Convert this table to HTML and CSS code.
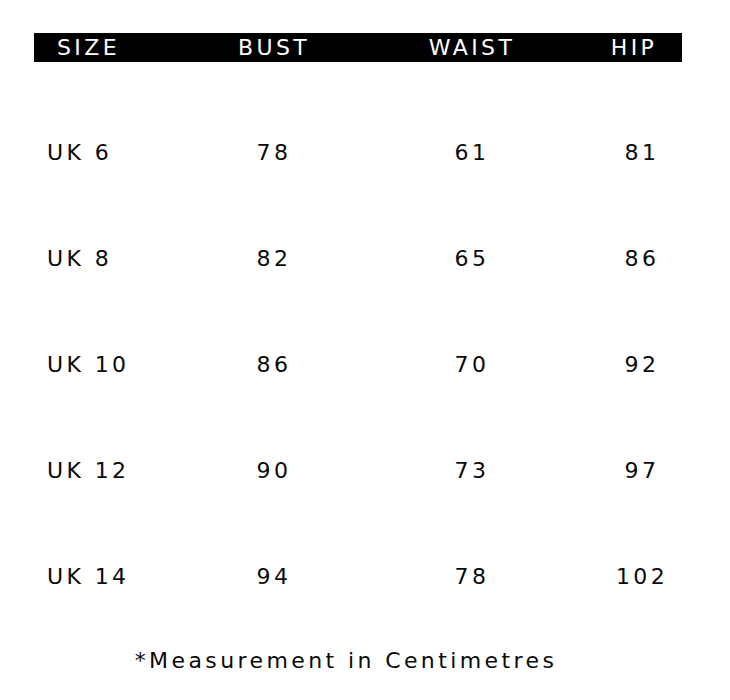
FILE: index.html
```html
<!DOCTYPE html>
<html>
<head>
<meta charset="utf-8">
<link rel="stylesheet" href="styles.css">
</head>
<body>
<div class="chart">
  <div class="row head">
    <div class="c1">SIZE</div>
    <div class="c2">BUST</div>
    <div class="c3">WAIST</div>
    <div class="c4">HIP</div>
  </div>
  <div class="body">
    <div class="row"><div class="c1">UK 6</div><div class="c2">78</div><div class="c3">61</div><div class="c4">81</div></div>
    <div class="row"><div class="c1">UK 8</div><div class="c2">82</div><div class="c3">65</div><div class="c4">86</div></div>
    <div class="row"><div class="c1">UK 10</div><div class="c2">86</div><div class="c3">70</div><div class="c4">92</div></div>
    <div class="row"><div class="c1">UK 12</div><div class="c2">90</div><div class="c3">73</div><div class="c4">97</div></div>
    <div class="row"><div class="c1">UK 14</div><div class="c2">94</div><div class="c3">78</div><div class="c4">102</div></div>
  </div>
  <div class="note">*Measurement in Centimetres</div>
</div>
</body>
</html>
```

FILE: styles.css
```css
html, body {
  margin: 0;
  padding: 0;
  background: #ffffff;
}
.chart {
  padding-top: 33px;
  padding-left: 34px;
  width: 648px;
  font-family: "DejaVu Sans", Verdana, sans-serif;
  font-size: 22px;
  letter-spacing: 3.4px;
  color: #0a0a0a;
}
.row {
  display: grid;
  grid-template-columns: 160px 158px 238px 92px;
  align-items: center;
  height: 106px;
  white-space: pre;
}
.row > div {
  text-align: center;
  padding-left: 2px;
}
.row > .c1 {
  text-align: left;
  padding-left: 13px;
}
.row > .c4 {
  padding-left: 12px;
}
.head {
  height: 29px;
  background: #000000;
  color: #ffffff;
}
.head > .c1 {
  padding-left: 23px;
}
.head > .c4 {
  padding-left: 0;
  padding-right: 4px;
}
.body {
  margin-top: 37px;
}
.note {
  height: 64px;
  line-height: 64px;
  text-align: center;
  padding-right: 24px;
}
```
